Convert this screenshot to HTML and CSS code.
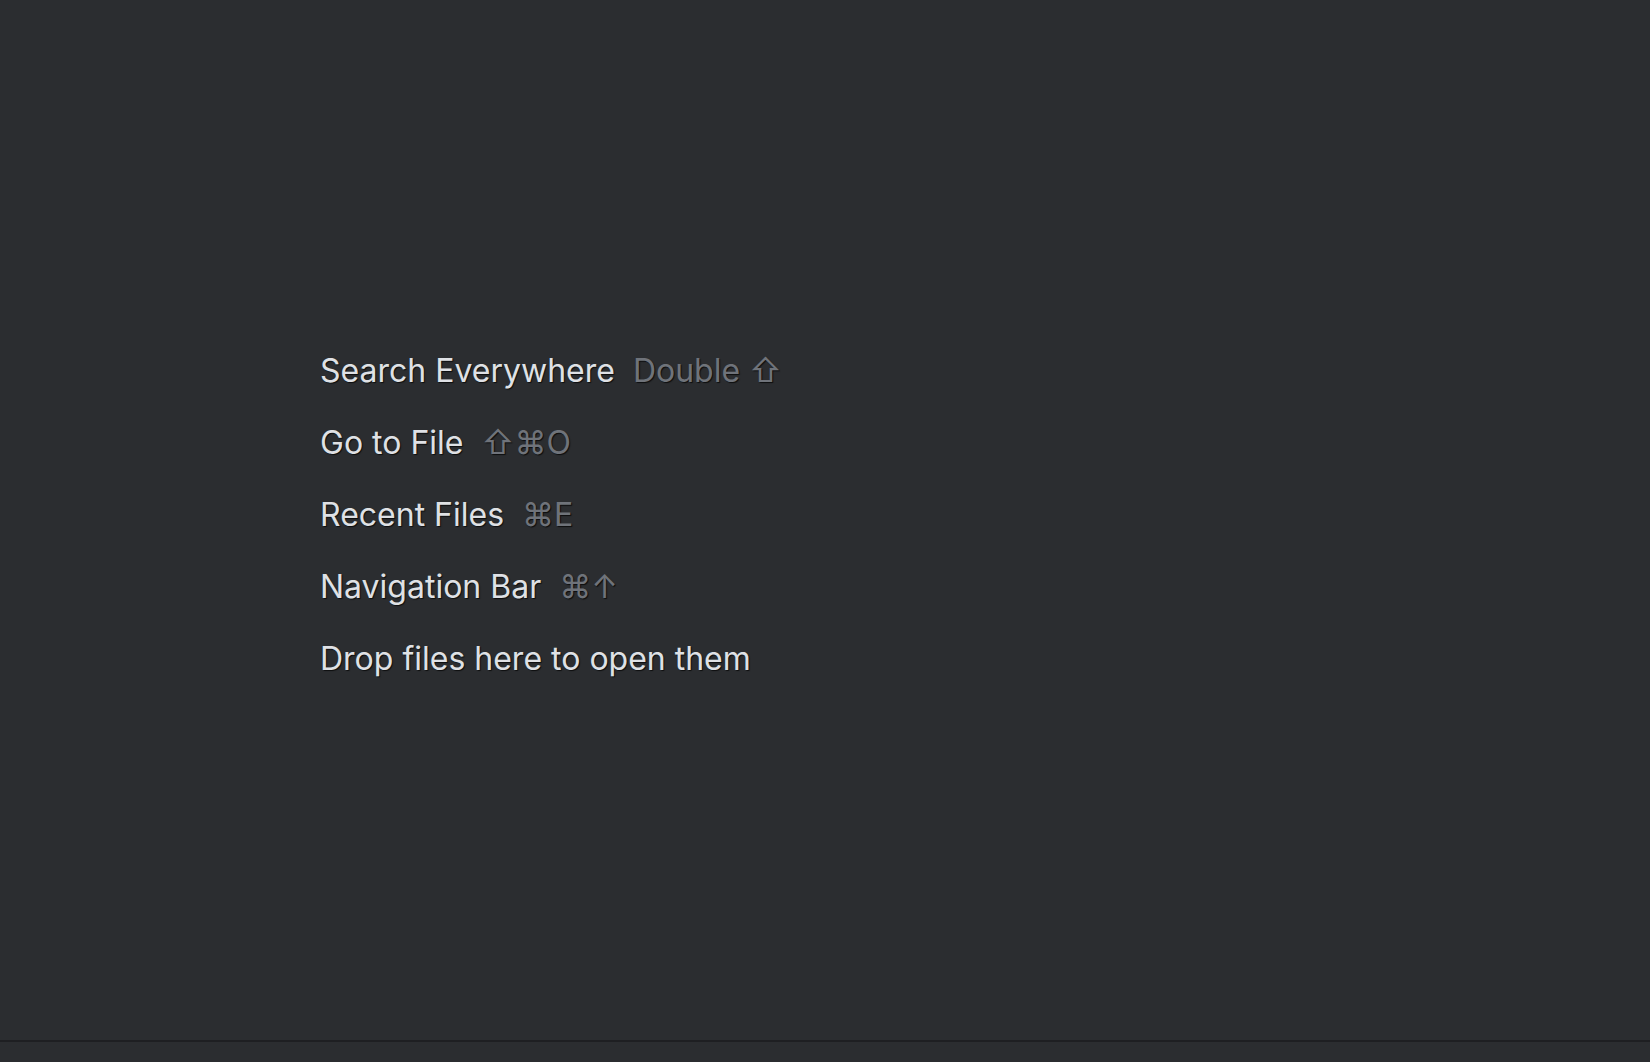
FILE: index.html
```html
<!DOCTYPE html>
<html>
<head>
<meta charset="utf-8">
<link rel="stylesheet" href="styles.css">
</head>
<body>
<div class="editor">
  <ul class="hints">
    <li class="hint"><span class="label">Search Everywhere</span><span class="keys">Double ⇧</span></li>
    <li class="hint"><span class="label">Go to File</span><span class="keys">⇧⌘O</span></li>
    <li class="hint"><span class="label">Recent Files</span><span class="keys">⌘E</span></li>
    <li class="hint"><span class="label">Navigation Bar</span><span class="keys">⌘↑</span></li>
    <li class="hint"><span class="label">Drop files here to open them</span></li>
  </ul>
</div>
<div class="divider"></div>
<div class="status"></div>
</body>
</html>
```

FILE: styles.css
```css
html, body {
  margin: 0;
  padding: 0;
  background: #2b2d30;
  width: 1650px;
  height: 1062px;
  overflow: hidden;
}
body {
  display: flex;
  flex-direction: column;
  font-family: Inter, "Noto Sans", sans-serif;
}
.editor {
  height: 1040px;
  box-sizing: border-box;
  padding: 335px 0 0 320px;
}
.hints {
  list-style: none;
  margin: 0;
  padding: 0;
}
.hint {
  font-size: 32px;
  line-height: 72px;
  white-space: nowrap;
  text-shadow: 1px 1px 1px rgba(0, 0, 0, 0.7);
}
.label {
  color: #dfe1e5;
}
.keys {
  color: #6f737a;
  margin-left: 18px;
}
.divider {
  height: 2px;
  background: #1e1f22;
}
.status {
  flex: 1;
  background: #2b2d30;
}
```
